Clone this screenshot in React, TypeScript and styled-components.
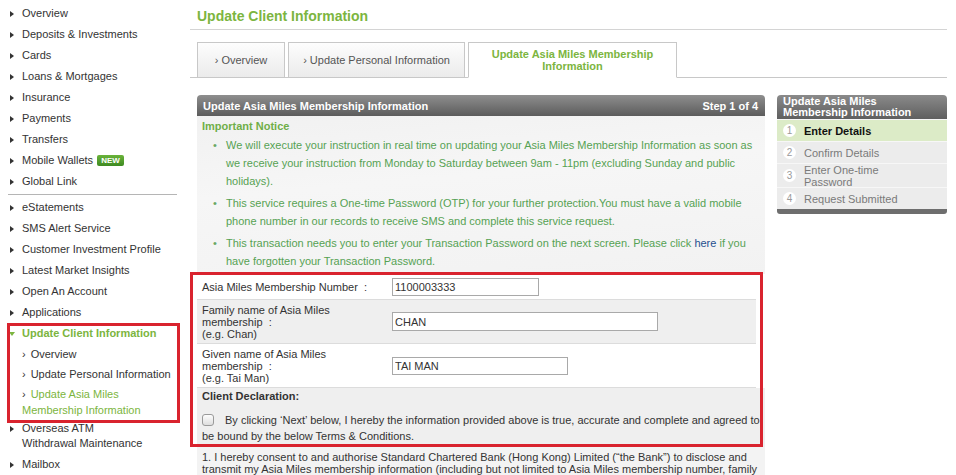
import React from "react";
import styled, { createGlobalStyle } from "styled-components";

const GlobalStyle = createGlobalStyle`
  html, body {
    margin: 0;
    padding: 0;
    background: #ffffff;
  }

  body {
    font-family: Arial, "Liberation Sans", sans-serif;
    font-size: 11px;
    color: #333333;
    overflow: hidden;
  }
`;

const Page = styled.div`
  display: flex;
  align-items: flex-start;
  width: 956px;
  height: 475px;
  overflow: hidden;
`;

/* ---------- sidebar ---------- */

const Sidebar = styled.nav`
  width: 169px;
  margin-left: 8px;
  padding-top: 3px;
  flex-shrink: 0;
`;

const NavItem = styled.div<{ $active?: boolean }>`
  display: flex;
  align-items: flex-start;
  padding: 3px 0;
  line-height: 15px;
  color: ${(p) => (p.$active ? "#7cb540" : "#333333")};
  font-weight: ${(p) => (p.$active ? "bold" : "normal")};
  cursor: pointer;
`;

const Bullet = styled.span<{ $down?: boolean }>`
  width: 14px;
  flex-shrink: 0;
  display: flex;
  align-items: center;
  height: 15px;
  padding-left: ${(p) => (p.$down ? "1px" : "2px")};
  box-sizing: border-box;

  &::before {
    content: "";
    display: block;
    width: 0;
    height: 0;
    ${(p) =>
      p.$down
        ? `border-left: 3px solid transparent;
           border-right: 3px solid transparent;
           border-top: 4px solid #7cb540;`
        : `border-top: 3px solid transparent;
           border-bottom: 3px solid transparent;
           border-left: 4px solid #333333;`}
  }
`;

const SubItem = styled.div<{ $active?: boolean }>`
  padding: 2px 0 2px 14px;
  line-height: 16px;
  color: ${(p) => (p.$active ? "#7cb540" : "#333333")};
  cursor: pointer;

  &:last-child {
    padding-bottom: 0;
  }

  &::before {
    content: "›";
    margin-right: 5px;
    color: #333333;
  }
`;

const Separator = styled.hr`
  border: 0;
  height: 1px;
  background: #b5b5b5;
  margin: 2px 0 2px 0;
`;

const Badge = styled.span`
  display: inline-block;
  margin-left: 4px;
  padding: 0 4px;
  height: 11px;
  line-height: 11px;
  font-size: 8px;
  font-weight: bold;
  color: #ffffff;
  background: linear-gradient(#6ab33a, #3e8a22);
  border-radius: 2px;
  vertical-align: 1px;
`;

const Highlight = styled.div<{ $inset: string }>`
  position: relative;

  &::after {
    content: "";
    position: absolute;
    inset: ${(p) => p.$inset};
    border: 3px solid #d9232e;
    pointer-events: none;
  }
`;

/* ---------- main ---------- */

const Main = styled.main`
  width: 757px;
  margin-left: 13px;
  flex-shrink: 0;
`;

const Title = styled.h1`
  margin: 0;
  padding: 8px 0 5px 7px;
  line-height: 16px;
  font-size: 14px;
  font-weight: bold;
  color: #7cb540;
  border-bottom: 1px solid #d4d4d4;
`;

const Tabs = styled.div`
  display: flex;
  align-items: stretch;
  gap: 3px;
  margin-top: 12px;
  padding-left: 7px;
  height: 35px;
  border-bottom: 1px solid #c8c8c8;
`;

const Tab = styled.div<{ $active?: boolean; $width: number }>`
  width: ${(p) => p.$width}px;
  box-sizing: border-box;
  display: flex;
  align-items: center;
  justify-content: center;
  text-align: center;
  padding: 0 12px;
  border: 1px solid #c8c8c8;
  border-bottom: ${(p) => (p.$active ? "1px solid #ffffff" : "0")};
  margin-bottom: ${(p) => (p.$active ? "-1px" : "0")};
  background: ${(p) =>
    p.$active ? "#ffffff" : "linear-gradient(#fdfdfd, #ebebeb)"};
  color: ${(p) => (p.$active ? "#7cb540" : "#555555")};
  font-weight: ${(p) => (p.$active ? "bold" : "normal")};
  line-height: 12px;
  cursor: pointer;
`;

const Content = styled.div`
  display: flex;
  align-items: flex-start;
  gap: 12px;
  margin-top: 17px;
  padding-left: 7px;
`;

const LeftColumn = styled.section`
  width: 568px;
  flex-shrink: 0;
`;

const PanelHeader = styled.div`
  height: 21px;
  display: flex;
  align-items: center;
  justify-content: space-between;
  padding: 0 7px 0 6px;
  background: linear-gradient(#8e8e8e, #5c5c5c);
  border-radius: 4px 4px 0 0;
  color: #ffffff;
  font-weight: bold;
`;

const Notice = styled.div`
  padding: 4px 6px 4px 5px;
  background: linear-gradient(175deg, #f1f1f1 0%, #f6f6f6 40%, #f2f2f2 100%);
`;

const NoticeTitle = styled.div`
  line-height: 13px;
  font-weight: bold;
  color: #6fae48;
`;

const NoticeList = styled.ul`
  list-style: none;
  margin: 3px 0 0;
  padding: 0;
`;

const NoticeItem = styled.li`
  display: flex;
  line-height: 18px;
  color: #56a253;
  margin-bottom: 4px;

  &:last-child {
    margin-bottom: 0;
  }
`;

const Dot = styled.span`
  width: 13px;
  margin-left: 11px;
  flex-shrink: 0;
  color: #6aa866;
`;

const NoticeLink = styled.a`
  color: #1f4f8f;
  text-decoration: none;
`;

const FormRow = styled.div<{ $shaded?: boolean; $height: number }>`
  display: flex;
  align-items: center;
  height: ${(p) => p.$height}px;
  background: ${(p) => (p.$shaded ? "#efefef" : "#ffffff")};
  border-bottom: 1px solid #dcdcdc;
  margin-right: 9px;
`;

const Label = styled.div`
  width: 190px;
  padding-left: 5px;
  flex-shrink: 0;
  line-height: 12px;
`;

const TextInput = styled.input<{ $width: number; $height?: number }>`
  width: ${(p) => p.$width}px;
  height: ${(p) => p.$height ?? 18}px;
  box-sizing: border-box;
  border: 1px solid #a9a9a9;
  padding: 0 2px;
  font-family: Arial, "Liberation Sans", sans-serif;
  font-size: 11px;
  color: #333333;
  background: #ffffff;
  outline: none;
`;

const Declaration = styled.div`
  background: #efefef;
  padding: 1px 3px 3px 5px;
`;

const DeclarationTitle = styled.div`
  line-height: 14px;
  font-weight: bold;
`;

const DeclarationText = styled.p`
  margin: 9px 0 0;
  line-height: 16px;
`;

const CheckBox = styled.span`
  display: inline-block;
  width: 12px;
  height: 12px;
  box-sizing: border-box;
  margin-right: 11px;
  vertical-align: -2px;
  border: 1px solid #9a9a9a;
  border-radius: 3px;
  background: linear-gradient(#fdfdfd, #dedede);
`;

const Terms = styled.p`
  margin: 0;
  padding: 4px 3px 0 5px;
  line-height: 12px;
  background: #f3f3f3;
`;

/* ---------- steps ---------- */

const StepPanel = styled.aside`
  width: 170px;
  flex-shrink: 0;
`;

const StepHeader = styled.div`
  padding: 1px 6px 1px;
  line-height: 11px;
  background: linear-gradient(#8a8a8a, #5f5f5f);
  border-radius: 4px 4px 0 0;
  color: #ffffff;
  font-weight: bold;
`;

const Step = styled.div<{ $current?: boolean; $height: number }>`
  display: flex;
  align-items: center;
  height: ${(p) => p.$height}px;
  padding-left: 6px;
  background: ${(p) => (p.$current ? "#dcebc7" : "#ececec")};
  border-top: 1px solid #f7f7f7;
  color: ${(p) => (p.$current ? "#111111" : "#7a7a7a")};
  font-weight: ${(p) => (p.$current ? "bold" : "normal")};
  line-height: 12px;
`;

const StepLabel = styled.span`
  white-space: pre-line;
`;

const StepNumber = styled.span`
  width: 13px;
  height: 13px;
  border-radius: 50%;
  background: #ffffff;
  color: #9a9a9a;
  font-size: 10px;
  font-weight: normal;
  display: flex;
  align-items: center;
  justify-content: center;
  margin-right: 8px;
  flex-shrink: 0;
`;

const StepFooter = styled.div`
  height: 5px;
  background: #6e6e6e;
  border-radius: 0 0 3px 3px;
`;

const topNav = [
  "Overview",
  "Deposits & Investments",
  "Cards",
  "Loans & Mortgages",
  "Insurance",
  "Payments",
  "Transfers",
];

const serviceNav = [
  "eStatements",
  "SMS Alert Service",
  "Customer Investment Profile",
  "Latest Market Insights",
  "Open An Account",
  "Applications",
];

const steps = [
  { n: 1, label: "Enter Details", h: 21 },
  { n: 2, label: "Confirm Details", h: 21 },
  { n: 3, label: "Enter One-time\nPassword", h: 23 },
  { n: 4, label: "Request Submitted", h: 21 },
];

export default function App() {
  return (
    <>
      <GlobalStyle />
      <Page>
        <Sidebar>
          {topNav.map((item) => (
            <NavItem key={item}>
              <Bullet />
              <span>{item}</span>
            </NavItem>
          ))}
          <NavItem>
            <Bullet />
            <span>
              Mobile Wallets<Badge>NEW</Badge>
            </span>
          </NavItem>
          <NavItem>
            <Bullet />
            <span>Global Link</span>
          </NavItem>

          <Separator />

          {serviceNav.map((item) => (
            <NavItem key={item}>
              <Bullet />
              <span>{item}</span>
            </NavItem>
          ))}

          <Highlight $inset="0 -3px -5px -1px">
            <NavItem $active>
              <Bullet $down />
              <span>Update Client Information</span>
            </NavItem>
            <SubItem>Overview</SubItem>
            <SubItem>Update Personal Information</SubItem>
            <SubItem $active>Update Asia Miles Membership Information</SubItem>
          </Highlight>

          <NavItem>
            <Bullet />
            <span>
              Overseas ATM
              <br />
              Withdrawal Maintenance
            </span>
          </NavItem>
          <NavItem>
            <Bullet />
            <span>Mailbox</span>
          </NavItem>
          <Separator />
        </Sidebar>

        <Main>
          <Title>Update Client Information</Title>

          <Tabs>
            <Tab $width={88}>› Overview</Tab>
            <Tab $width={177}>› Update Personal Information</Tab>
            <Tab $width={209} $active>
              Update Asia Miles Membership Information
            </Tab>
          </Tabs>

          <Content>
            <LeftColumn>
              <PanelHeader>
                <span>Update Asia Miles Membership Information</span>
                <span>Step 1 of 4</span>
              </PanelHeader>

              <Notice>
                <NoticeTitle>Important Notice</NoticeTitle>
                <NoticeList>
                  <NoticeItem>
                    <Dot>•</Dot>
                    <span>
                      We will execute your instruction in real time on updating
                      your Asia Miles Membership Information as soon as we
                      receive your instruction from Monday to Saturday between
                      9am - 11pm (excluding Sunday and public holidays).
                    </span>
                  </NoticeItem>
                  <NoticeItem>
                    <Dot>•</Dot>
                    <span>
                      This service requires a One-time Password (OTP) for your
                      further protection.You must have a valid mobile phone
                      number in our records to receive SMS and complete this
                      service request.
                    </span>
                  </NoticeItem>
                  <NoticeItem>
                    <Dot>•</Dot>
                    <span>
                      This transaction needs you to enter your Transaction
                      Password on the next screen. Please click{" "}
                      <NoticeLink href="#">here</NoticeLink> if you have
                      forgotten your Transaction Password.
                    </span>
                  </NoticeItem>
                </NoticeList>
              </Notice>

              <Highlight $inset="-2px 2px 0 -7px">
                <FormRow $height={25}>
                  <Label>Asia Miles Membership Number &nbsp;:</Label>
                  <TextInput $width={147} defaultValue="1100003333" />
                </FormRow>
                <FormRow $height={43} $shaded>
                  <Label>
                    Family name of Asia Miles
                    <br />
                    membership &nbsp;:
                    <br />
                    (e.g. Chan)
                  </Label>
                  <TextInput $width={266} $height={19} defaultValue="CHAN" />
                </FormRow>
                <FormRow $height={43}>
                  <Label>
                    Given name of Asia Miles
                    <br />
                    membership &nbsp;:
                    <br />
                    (e.g. Tai Man)
                  </Label>
                  <TextInput $width={176} defaultValue="TAI MAN" />
                </FormRow>
                <Declaration>
                  <DeclarationTitle>Client Declaration:</DeclarationTitle>
                  <DeclarationText>
                    <CheckBox />
                    By clicking ‘Next’ below, I hereby the information provided
                    above is true, accurate and complete and agreed to be bound
                    by the below Terms &amp; Conditions.
                  </DeclarationText>
                </Declaration>
              </Highlight>

              <Terms>
                1. I hereby consent to and authorise Standard Chartered Bank
                (Hong Kong) Limited (“the Bank”) to disclose and transmit my
                Asia Miles membership information (including but not limited to
                Asia Miles membership number, family name and given name) to
                Asia Miles Limited.
              </Terms>
            </LeftColumn>

            <StepPanel>
              <StepHeader>Update Asia Miles Membership Information</StepHeader>
              {steps.map((s) => (
                <Step key={s.n} $current={s.n === 1} $height={s.h}>
                  <StepNumber>{s.n}</StepNumber>
                  <StepLabel>{s.label}</StepLabel>
                </Step>
              ))}
              <StepFooter />
            </StepPanel>
          </Content>
        </Main>
      </Page>
    </>
  );
}
